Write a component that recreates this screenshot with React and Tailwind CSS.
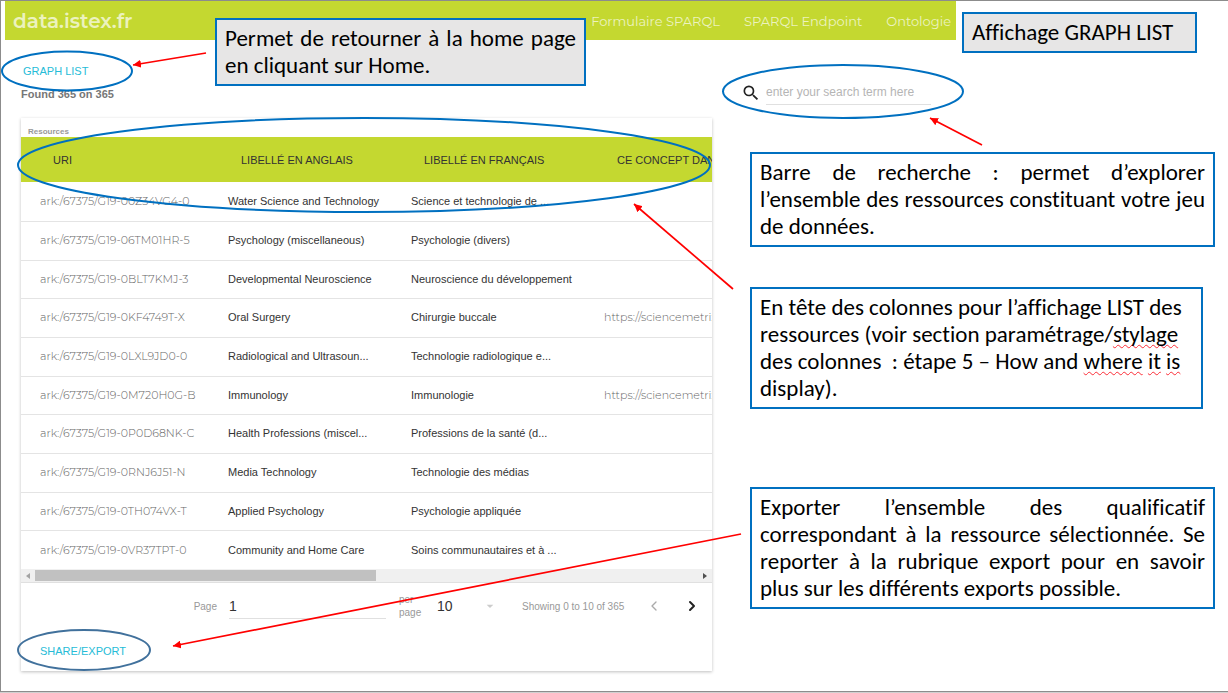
import { ChevronLeft, ChevronRight } from "lucide-react";
import { MdSearch, MdArrowDropDown } from "react-icons/md";

const rows = [
  ["ark:/67375/G19-00Z34VG4-0", "Water Science and Technology", "Science et technologie de ...", ""],
  ["ark:/67375/G19-06TM01HR-5", "Psychology (miscellaneous)", "Psychologie (divers)", ""],
  ["ark:/67375/G19-0BLT7KMJ-3", "Developmental Neuroscience", "Neuroscience du développement", ""],
  ["ark:/67375/G19-0KF4749T-X", "Oral Surgery", "Chirurgie buccale", "https://sciencemetrix"],
  ["ark:/67375/G19-0LXL9JD0-0", "Radiological and Ultrasoun...", "Technologie radiologique e...", ""],
  ["ark:/67375/G19-0M720H0G-B", "Immunology", "Immunologie", "https://sciencemetrix"],
  ["ark:/67375/G19-0P0D68NK-C", "Health Professions (miscel...", "Professions de la santé (d...", ""],
  ["ark:/67375/G19-0RNJ6J51-N", "Media Technology", "Technologie des médias", ""],
  ["ark:/67375/G19-0TH074VX-T", "Applied Psychology", "Psychologie appliquée", ""],
  ["ark:/67375/G19-0VR37TPT-0", "Community and Home Care", "Soins communautaires et à ...", ""],
];

const headings = ["URI", "LIBELLÉ EN ANGLAIS", "LIBELLÉ EN FRANÇAIS", "CE CONCEPT DANS"];

const arrows = [
  [206, 53, 133, 65],
  [982, 145, 930, 118],
  [733, 289, 634, 204],
  [741, 534, 173, 646],
];

function Note({ className = "", children }) {
  return (
    <p
      className={`border-2 border-[#0070c0] px-2 font-['Carlito','Lato',sans-serif] text-[23px] leading-[27px] text-black [font-variant-ligatures:none] ${className}`}
    >
      {children}
    </p>
  );
}

function Misspelt({ children }) {
  return (
    <span className="underline decoration-red-500 decoration-wavy decoration-1 underline-offset-2 [text-decoration-skip-ink:none]">
      {children}
    </span>
  );
}

function Header() {
  return (
    <div className="relative flex items-start">
      <header className="ml-1 flex h-[39px] flex-1 items-center justify-between bg-[#c4d830] pr-[5px] pl-2 font-['Montserrat','Inter',sans-serif] text-white/70">
        <a href="#home" className="text-[20px] leading-6 font-semibold">data.istex.fr</a>
        <nav className="flex gap-6 text-[13px] leading-5">
          <a href="#form">Formulaire SPARQL</a>
          <a href="#endpoint">SPARQL Endpoint</a>
          <a href="#ontologie">Ontologie</a>
        </nav>
      </header>
      <Note className="mt-[11px] mr-[31px] ml-[6px] w-[235px] bg-[#e7e6e6] py-[5px]">Affichage GRAPH LIST</Note>
      <Note className="absolute top-[17px] left-[214px] w-[371px] bg-[#e7e6e6] py-[5px] text-justify">
        Permet de retourner à la home page en cliquant sur Home.
      </Note>
    </div>
  );
}

function ResourceTable() {
  return (
    <div className="overflow-hidden">
      <table className="w-[1356px] table-fixed border-collapse text-left text-[11px] text-[#333]">
        <colgroup>
          <col className="w-[188px]" />
          <col className="w-[183px]" />
          <col className="w-[193px]" />
          <col />
        </colgroup>
        <thead>
          <tr className="h-[45px] bg-[#c4d830]">
            {headings.map((h) => (
              <th key={h} scope="col" className="p-0 pt-[2px] pl-8 font-normal whitespace-nowrap">{h}</th>
            ))}
          </tr>
        </thead>
        <tbody>
          {rows.map(([uri, en, fr, link]) => (
            <tr key={uri} className="h-[39px] border-b border-[#e4e4e4] nth-[3n]:h-[38px] last:border-b-0">
              <td className="p-0 pl-[19px] font-['Montserrat','Inter',sans-serif] font-light text-[#666]">
                <a href="#resource">{uri}</a>
              </td>
              <td className="p-0 pl-[19px]">{en}</td>
              <td className="p-0 pl-[19px]">{fr}</td>
              <td className="p-0 pl-[19px] font-['Montserrat','Inter',sans-serif] font-light text-[#666]">
                {link && <a href="#concept">{link}</a>}
              </td>
            </tr>
          ))}
        </tbody>
      </table>
    </div>
  );
}

function ScrollTrack() {
  return (
    <div className="flex h-[14px] items-center justify-between border-b border-[#e0e0e0] bg-[#f0f0f0] px-[5px]">
      <svg className="h-[6px] w-1" viewBox="0 0 4 6"><path d="M4 0v6L0 3z" fill="#a3a3a3" /></svg>
      <div className="mr-auto ml-[5px] h-[11px] w-1/2 bg-[#c1c1c1]" />
      <svg className="h-[6px] w-1" viewBox="0 0 4 6"><path d="M0 0v6l4-3z" fill="#505050" /></svg>
    </div>
  );
}

function Pagination() {
  return (
    <div className="flex h-[46px] items-center pr-3 text-[10px] leading-[13px] text-[#999]">
      <label htmlFor="page" className="ml-auto">Page</label>
      <input
        id="page"
        defaultValue="1"
        className="ml-3 h-[26px] w-[157px] border-b border-[#e0e0e0] text-[14px] text-[#333] outline-none"
      />
      <label htmlFor="size" className="ml-[13px] w-[38px]">per<br />page</label>
      <div className="grid w-[61px] items-center">
        <select
          id="size"
          className="col-start-1 row-start-1 appearance-none text-[14px] leading-5 text-[#333] outline-none"
        >
          <option>10</option>
        </select>
        <MdArrowDropDown className="pointer-events-none col-start-1 row-start-1 size-4 justify-self-end text-[#ccc]" />
      </div>
      <span className="ml-6 w-[124px] whitespace-nowrap">Showing 0 to 10 of 365</span>
      <button aria-label="Previous page" className="text-[#aaa]"><ChevronLeft className="size-4" /></button>
      <button aria-label="Next page" className="ml-[22px] text-[#222]"><ChevronRight className="size-4" strokeWidth={3} /></button>
    </div>
  );
}

function Annotations() {
  return (
    <svg
      className="pointer-events-none absolute top-0 left-0 h-[692px] w-full"
      viewBox="1 1 1227 692"
      preserveAspectRatio="none"
      fill="none"
      aria-hidden="true"
    >
      <defs>
        <marker id="head" viewBox="0 0 8 8" refX="8" refY="4" markerWidth="8" markerHeight="8" markerUnits="userSpaceOnUse" orient="auto">
          <path d="M0 0l8 4-8 4z" fill="#f00" />
        </marker>
      </defs>
      <g stroke="#0070c0" strokeWidth="2">
        <ellipse cx="67" cy="71" rx="65" ry="19.5" />
        <ellipse cx="364" cy="165" rx="346" ry="47" />
        <ellipse cx="843" cy="91.5" rx="120" ry="26.5" />
        <ellipse cx="84" cy="650" rx="66" ry="20" stroke="#41719c" />
      </g>
      <g stroke="#f00" strokeWidth="1.7">
        {arrows.map(([x1, y1, x2, y2]) => (
          <line key={y1} x1={x1} y1={y1} x2={x2} y2={y2} markerEnd="url(#head)" />
        ))}
      </g>
    </svg>
  );
}

export default function App() {
  return (
    <div className="bg-[#d0d0d0] pb-px font-['Liberation_Sans',Arial,sans-serif]">
      <div className="relative min-h-[calc(100vh-1px)] overflow-hidden border-t border-b border-l border-[#8c8c8c] bg-white">
        <Header />
        <div className="grid grid-cols-[minmax(0,691fr)_minmax(0,478fr)] gap-x-[25px] pr-[13px] pl-5">
          <main>
            <button className="mt-2 ml-[2px] block text-[11px] leading-5 text-[#26bcd7]">GRAPH LIST</button>
            <h1 className="mt-[6px] text-[11px] leading-[14px] font-bold text-[#777]">Found 365 on 365</h1>
            <section className="mt-[17px] pb-[10px] shadow-[0_1px_3px_rgba(0,0,0,0.25)]">
              <h2 className="pt-2 pl-[7px] text-[8px] leading-[11px] font-bold text-[#999]">Resources</h2>
              <ResourceTable />
              <ScrollTrack />
              <Pagination />
              <button className="mt-3 ml-[19px] block text-[11px] leading-5 text-[#26bcd7]">SHARE/EXPORT</button>
            </section>
          </main>
          <aside>
            <label className="mt-[27px] ml-1 flex w-[190px] items-center gap-[5px]">
              <MdSearch className="size-5 shrink-0 text-[#222]" />
              <input
                type="search"
                aria-label="Search"
                placeholder="enter your search term here"
                className="h-[25px] min-w-0 flex-1 border-b border-[#e0e0e0] text-[12px] outline-none placeholder:text-[#b5b5b5]"
              />
            </label>
            <div className="ml-[13px] flex flex-col items-start">
              <Note className="mt-[47px] w-full bg-white py-[5px] text-justify">
                Barre de recherche : permet d’explorer l’ensemble des ressources constituant votre jeu de données.
              </Note>
              <Note className="mt-10 mr-3 bg-white py-[5px]">
                En tête des colonnes pour l’affichage LIST des ressources (voir section paramétrage/
                <Misspelt>stylage</Misspelt> des colonnes&nbsp; : étape 5 – How and <Misspelt>where</Misspelt>{" "}
                <Misspelt>it</Misspelt> <Misspelt>is</Misspelt> display).
              </Note>
              <Note className="mt-[78px] w-full bg-white py-[5px] text-justify">
                Exporter l’ensemble des qualificatif correspondant à la ressource sélectionnée. Se reporter à la
                rubrique export pour en savoir plus sur les différents exports possible.
              </Note>
            </div>
          </aside>
        </div>
        <Annotations />
      </div>
    </div>
  );
}
